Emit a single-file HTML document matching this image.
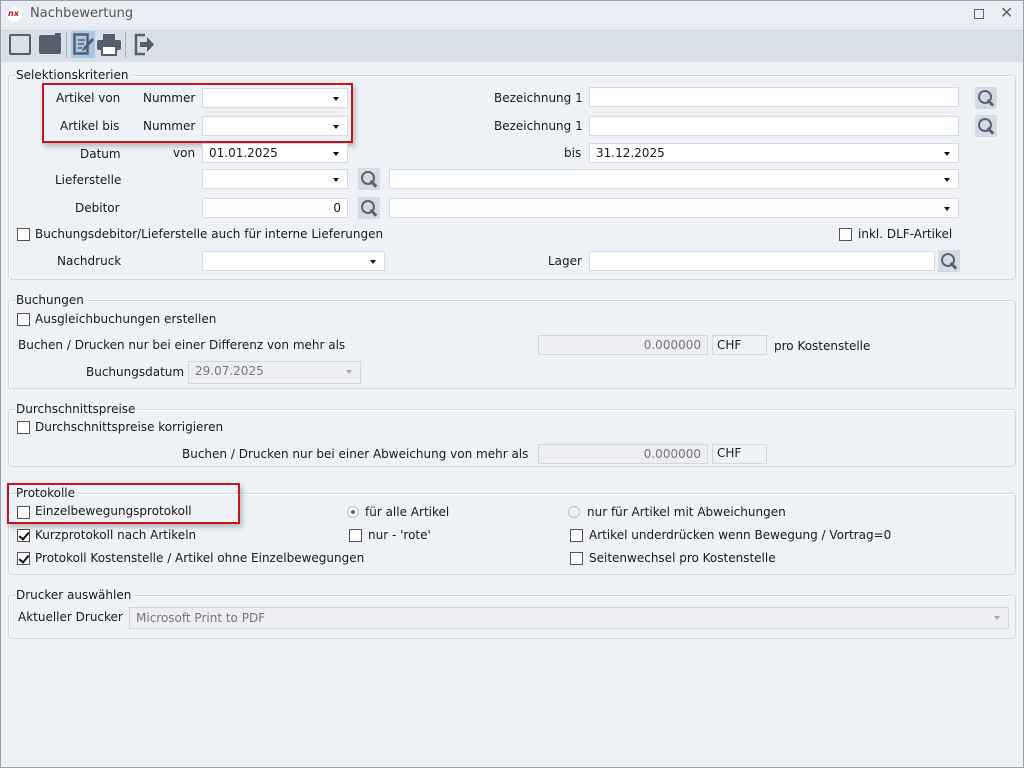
<!DOCTYPE html>
<html><head><meta charset="utf-8"><style>
*{box-sizing:border-box;margin:0;padding:0}
body{width:1024px;height:768px;overflow:hidden;background:#eef1f6;font-family:"DejaVu Sans","Liberation Sans",sans-serif;font-size:12px;color:#1a1a1a;position:relative;letter-spacing:0}
.a{position:absolute;white-space:nowrap;line-height:20px}
.r{text-align:right}
.in{position:absolute;height:20px;background:#fff;border:1px solid #d6dbe3}
.in.dis{background:#eceef1;border-color:#d3d7dd;color:#777}
.dd::after{content:"";position:absolute;right:8px;top:8px;border-left:3.5px solid transparent;border-right:3.5px solid transparent;border-top:4px solid #111}
.dd.dis::after{border-top-color:#aaa}
.grp{position:absolute;left:8px;width:1008px;border:1px solid #d3d8e0;border-radius:3px;box-shadow:inset 1px 1px 0 #fff}
.gt{position:absolute;left:16px;background:#eef1f6;padding-right:3px;line-height:14px}
.cb{position:absolute;width:13px;height:13px;border:1px solid #555;background:#fff}
.cb.on::after{content:"";position:absolute;left:3px;top:0px;width:4px;height:8px;border:solid #111;border-width:0 2px 2px 0;transform:rotate(40deg)}
.rd{position:absolute;width:12px;height:12px;border:1px solid #bbb;border-radius:50%;background:#fff}
.rd.on::after{content:"";position:absolute;left:3px;top:3px;width:4px;height:4px;border-radius:50%;background:#666}
.lens{position:absolute;width:22px;height:22px;background:#d5dbe3}
.red{position:absolute;border:2px solid #c0161c;box-shadow:2px 3px 5px rgba(0,0,0,.25)}
.txt{padding:0 6px;line-height:18px}
.lens::before{content:"";position:absolute;left:3px;top:3px;width:10px;height:10px;border:2px solid #5a6472;border-radius:50%}
.lens::after{content:"";position:absolute;left:14px;top:12px;width:2.5px;height:8px;background:#5a6472;transform:rotate(-45deg)}
</style></head><body>
<div style="position:absolute;left:0;top:0;width:1024px;height:28px;background:#eaedf3;border-bottom:1px solid #e0e4ea"></div>
<div style="position:absolute;left:7px;top:7px;width:15px;height:15px;border-radius:50%;background:#fff"></div>
<div class="a" style="left:8px;top:4px;font-size:8px;font-weight:bold;font-style:italic;color:#c0161c">nx</div>
<div class="a" style="left:30px;top:4px;color:#555;font-size:13px">Nachbewertung</div>
<div style="position:absolute;left:974px;top:9px;width:10px;height:10px;border:1px solid #666"></div>
<div class="a" style="left:1000px;top:3px;color:#666;font-size:16px">✕</div>
<div style="position:absolute;left:0;top:29px;width:1024px;height:33px;background:#d9dfe7"></div>
<div style="position:absolute;left:9px;top:34px;width:22px;height:21px;border:2.5px solid #56606c;border-radius:2px"></div>
<div style="position:absolute;left:39px;top:35px;width:22px;height:19px;background:#56606c;border-radius:2px"></div>
<div style="position:absolute;left:55px;top:33px;width:6px;height:2px;background:#56606c"></div>
<div style="position:absolute;left:66px;top:32px;width:1px;height:26px;background:#aab2bd"></div>
<div style="position:absolute;left:71px;top:31px;width:24px;height:27px;background:#a9c6e4"></div>
<svg style="position:absolute;left:73px;top:33px" width="22" height="23" viewBox="0 0 22 23"><rect x="1.5" y="1.5" width="13" height="19" fill="none" stroke="#56606c" stroke-width="2.5"/><path d="M5 7h7M5 11h6M5 15h4" stroke="#56606c" stroke-width="1.5"/><path d="M19 5l2 2-9 10-3 1 1-3z" fill="#56606c"/></svg>
<svg style="position:absolute;left:97px;top:34px" width="24" height="22" viewBox="0 0 24 22"><rect x="6" y="0" width="12" height="6" fill="#56606c"/><rect x="0" y="6" width="24" height="10" rx="2" fill="#56606c"/><rect x="5" y="12" width="14" height="9" fill="#fff" stroke="#56606c" stroke-width="2"/></svg>
<div style="position:absolute;left:125px;top:32px;width:1px;height:26px;background:#aab2bd"></div>
<svg style="position:absolute;left:133px;top:33px" width="22" height="23" viewBox="0 0 22 23"><path d="M12 2H3v19h9" fill="none" stroke="#56606c" stroke-width="2.5"/><path d="M7 9h7V4l7 7.5-7 7.5v-5H7z" fill="#56606c"/></svg>

<div class="grp" style="top:75px;height:205px"></div>
<div class="a gt" style="top:68px">Selektionskriterien</div>
<div class="a" style="left:56px;top:88px">Artikel von</div>
<div class="a" style="left:143px;top:88px">Nummer</div>
<div class="in dd" style="left:202px;top:88px;width:146px"></div>
<div class="a" style="left:60px;top:116px">Artikel bis</div>
<div class="a" style="left:143px;top:116px">Nummer</div>
<div class="in dd" style="left:202px;top:116px;width:146px"></div>
<div class="red" style="left:42px;top:83px;width:311px;height:60px"></div>
<div class="a" style="left:494px;top:88px">Bezeichnung 1</div>
<div class="in" style="left:589px;top:87px;width:370px"></div>
<div class="lens" style="left:975px;top:87px"></div>
<div class="a" style="left:494px;top:116px">Bezeichnung 1</div>
<div class="in" style="left:589px;top:116px;width:370px"></div>
<div class="lens" style="left:975px;top:115px"></div>
<div class="a" style="left:80px;top:144px">Datum</div>
<div class="a" style="left:173px;top:143px">von</div>
<div class="in dd txt" style="left:202px;top:143px;width:146px">01.01.2025</div>
<div class="a" style="left:564px;top:143px">bis</div>
<div class="in dd txt" style="left:589px;top:143px;width:370px">31.12.2025</div>
<div class="a" style="left:55px;top:170px">Lieferstelle</div>
<div class="in dd" style="left:202px;top:169px;width:146px"></div>
<div class="lens" style="left:358px;top:168px"></div>
<div class="in dd" style="left:389px;top:169px;width:570px"></div>
<div class="a" style="left:75px;top:198px">Debitor</div>
<div class="in txt r" style="left:202px;top:198px;width:146px">0</div>
<div class="lens" style="left:358px;top:197px"></div>
<div class="in dd" style="left:389px;top:198px;width:570px"></div>
<div class="cb" style="left:17px;top:228px"></div>
<div class="a" style="left:35px;top:224px">Buchungsdebitor/Lieferstelle auch für interne Lieferungen</div>
<div class="cb" style="left:839px;top:228px"></div>
<div class="a" style="left:858px;top:224px">inkl. DLF-Artikel</div>
<div class="a" style="left:57px;top:251px">Nachdruck</div>
<div class="in dd" style="left:202px;top:251px;width:183px"></div>
<div class="a" style="left:548px;top:251px">Lager</div>
<div class="in" style="left:589px;top:251px;width:346px"></div>
<div class="lens" style="left:938px;top:250px"></div>

<div class="grp" style="top:300px;height:89px"></div>
<div class="a gt" style="top:293px">Buchungen</div>
<div class="cb" style="left:17px;top:313px"></div>
<div class="a" style="left:35px;top:309px">Ausgleichbuchungen erstellen</div>
<div class="a" style="left:18px;top:335px">Buchen / Drucken nur bei einer Differenz von mehr als</div>
<div class="in dis txt r" style="left:538px;top:335px;width:170px">0.000000</div>
<div class="in dis" style="left:712px;top:335px;width:55px;background:#eef1f6"></div>
<div class="a" style="left:717px;top:335px">CHF</div>
<div class="a" style="left:774px;top:336px">pro Kostenstelle</div>
<div class="a" style="left:86px;top:362px">Buchungsdatum</div>
<div class="in dis dd txt" style="left:188px;top:361px;width:173px;height:23px">29.07.2025</div>

<div class="grp" style="top:409px;height:58px"></div>
<div class="a gt" style="top:402px">Durchschnittspreise</div>
<div class="cb" style="left:17px;top:421px"></div>
<div class="a" style="left:35px;top:417px">Durchschnittspreise korrigieren</div>
<div class="a" style="left:182px;top:444px">Buchen / Drucken nur bei einer Abweichung von mehr als</div>
<div class="in dis txt r" style="left:538px;top:444px;width:170px">0.000000</div>
<div class="in dis" style="left:712px;top:444px;width:55px;background:#eef1f6"></div>
<div class="a" style="left:717px;top:443px">CHF</div>

<div class="grp" style="top:493px;height:82px"></div>
<div class="a gt" style="top:486px">Protokolle</div>
<div class="cb" style="left:17px;top:506px"></div>
<div class="a" style="left:35px;top:501px">Einzelbewegungsprotokoll</div>
<div class="red" style="left:7px;top:483px;width:233px;height:41px"></div>
<div class="rd on" style="left:347px;top:506px"></div>
<div class="a" style="left:365px;top:502px">für alle Artikel</div>
<div class="rd" style="left:568px;top:506px;background:#eef1f6"></div>
<div class="a" style="left:587px;top:502px">nur für Artikel mit Abweichungen</div>
<div class="cb on" style="left:17px;top:529px"></div>
<div class="a" style="left:35px;top:525px">Kurzprotokoll nach Artikeln</div>
<div class="cb" style="left:349px;top:529px"></div>
<div class="a" style="left:368px;top:525px">nur - 'rote'</div>
<div class="cb" style="left:570px;top:529px"></div>
<div class="a" style="left:589px;top:525px">Artikel underdrücken wenn Bewegung / Vortrag=0</div>
<div class="cb on" style="left:17px;top:552px"></div>
<div class="a" style="left:35px;top:548px">Protokoll Kostenstelle / Artikel ohne Einzelbewegungen</div>
<div class="cb" style="left:570px;top:552px"></div>
<div class="a" style="left:589px;top:548px">Seitenwechsel pro Kostenstelle</div>

<div class="grp" style="top:595px;height:44px"></div>
<div class="a gt" style="top:588px">Drucker auswählen</div>
<div class="a" style="left:18px;top:607px">Aktueller Drucker</div>
<div class="in dis dd txt" style="left:129px;top:607px;width:880px;height:22px;line-height:20px">Microsoft Print to PDF</div>
<div style="position:absolute;left:0;top:0;width:1024px;height:768px;border:1px solid #9aa3ae;pointer-events:none"></div>
</body></html>
